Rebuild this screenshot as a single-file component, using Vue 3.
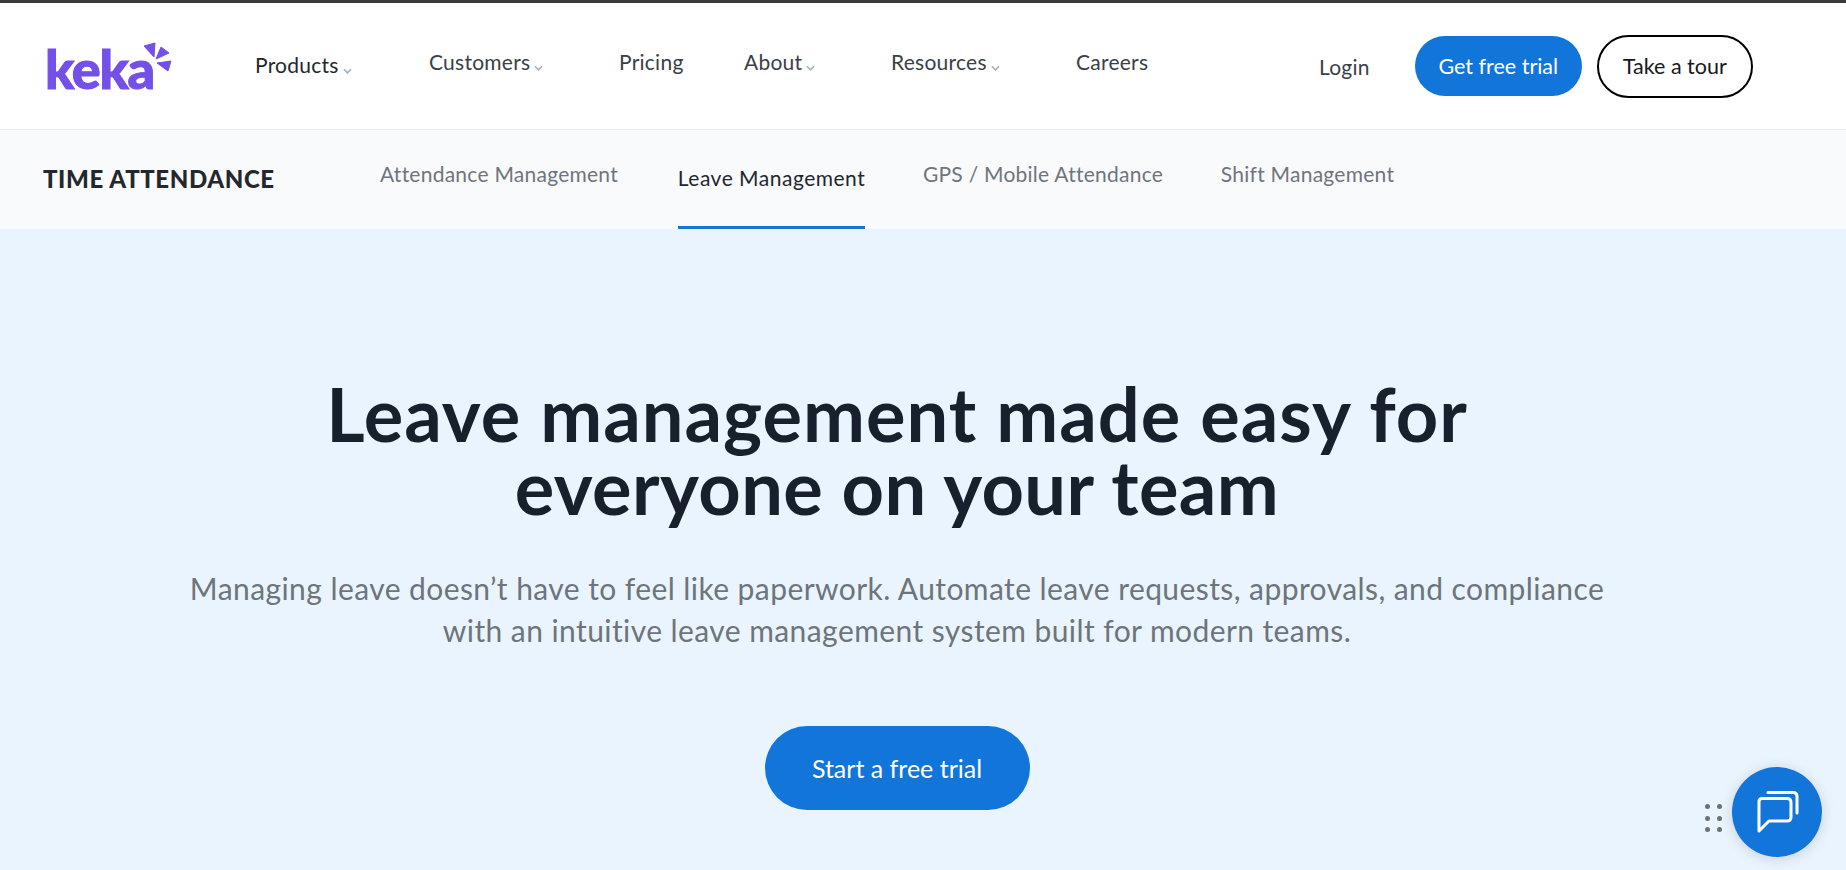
<script setup>
const navItems = [
  { label: 'Products', caret: true, dark: true, width: 174 },
  { label: 'Customers', caret: true, width: 190 },
  { label: 'Pricing', width: 125 },
  { label: 'About', caret: true, width: 147 },
  { label: 'Resources', caret: true, width: 185 },
  { label: 'Careers', width: 200 },
]
const subItems = [
  { label: 'Attendance Management', width: 238 },
  { label: 'Leave Management', width: 187, active: true },
  { label: 'GPS / Mobile Attendance', width: 236 },
  { label: 'Shift Management', width: 173 },
]
</script>

<template>
  <div class="page">
    <header class="topnav">
      <a class="logo" href="#">
        <span class="logo-word">keka</span>
        <svg class="logo-rays" viewBox="0 0 30 32" width="30" height="32">
          <path d="M1 4 L12 1 L11 15 Z" />
          <path d="M13 17 L18 5 L26 11 Z" />
          <path d="M14 21 L28 19 L25 29 Z" />
        </svg>
      </a>
      <nav class="menu">
        <a
          v-for="item in navItems"
          :key="item.label"
          class="menu-item"
          :class="{ dark: item.dark }"
          :style="{ width: item.width + 'px' }"
          href="#"
        >
          {{ item.label }}<svg v-if="item.caret" class="caret" viewBox="0 0 10 6" width="9" height="6">
            <path d="M1 1 L5 5 L9 1" />
          </svg>
        </a>
      </nav>
      <div class="actions">
        <a class="login" href="#">Login</a>
        <a class="btn-trial" href="#">Get free trial</a>
        <a class="btn-tour" href="#">Take a tour</a>
      </div>
    </header>

    <div class="subnav">
      <div class="subnav-title">TIME ATTENDANCE</div>
      <nav class="subnav-links">
        <a
          v-for="item in subItems"
          :key="item.label"
          class="subnav-link"
          :class="{ active: item.active }"
          :style="{ width: item.width + 'px' }"
          href="#"
        >{{ item.label }}</a>
      </nav>
    </div>

    <main class="hero">
      <h1>Leave management made easy for<br /><span class="tight">everyone on your team</span></h1>
      <p>
        Managing leave doesn’t have to feel like paperwork. Automate leave requests, approvals, and compliance<br />
        with an intuitive leave management system built for modern teams.
      </p>
      <a class="btn-start" href="#">Start a free trial</a>
    </main>

    <div class="chat-dots">
      <i v-for="n in 6" :key="n"></i>
    </div>
    <button class="chat" type="button">
      <svg viewBox="0 0 44 44" width="44" height="44">
        <path d="M13 2.5 H38 Q42 2.5 42 6.5 V23" />
        <path d="M7 8.5 H32 Q36 8.5 36 12.5 V27 Q36 31 32 31 H14 L4 41 V11.5 Q4 8.5 7 8.5 Z" />
      </svg>
    </button>
  </div>
</template>

<style>
html,
body {
  margin: 0;
  background: #eaf4fe;
}
</style>

<style scoped>
.page {
  height: 870px;
  overflow: hidden;
  position: relative;
  font-family: Lato, "Noto Sans", sans-serif;
  border-top: 3px solid #3a3a3a;
  box-sizing: border-box;
}

a {
  text-decoration: none;
  color: inherit;
}

.topnav {
  height: 126px;
  background: #fff;
  border-bottom: 1px solid #ececec;
  display: flex;
  align-items: center;
  padding-left: 47px;
}

.logo {
  width: 208px;
  height: 39px;
  position: relative;
  color: #7350e8;
  margin-top: 5px;
}

.logo-word {
  display: block;
  margin-left: -2px;
  font-size: 54px;
  line-height: 39px;
  font-weight: 900;
  letter-spacing: -1.3px;
  -webkit-text-stroke: 1px #7350e8;
}

.logo-rays {
  position: absolute;
  left: 96px;
  top: -7px;
  fill: #7350e8;
  stroke: #7350e8;
  stroke-width: 1;
  stroke-linejoin: round;
}

.menu {
  display: flex;
  align-items: center;
  margin-top: -9px;
}

.menu-item {
  font-size: 21px;
  letter-spacing: 0.25px;
  color: #3a4048;
  white-space: nowrap;
}

.menu-item.dark {
  color: #1f2730;
  position: relative;
  top: 3px;
}

.caret {
  fill: none;
  stroke: #a9afb6;
  stroke-width: 1.8;
  margin-left: 4px;
  vertical-align: -1px;
}

.actions {
  display: flex;
  align-items: center;
  margin-left: 43px;
}

.login {
  font-size: 21px;
  letter-spacing: 0.25px;
  color: #3a4048;
  margin-right: 45px;
}

.btn-trial {
  width: 167px;
  height: 60px;
  border-radius: 30px;
  background: #1175d9;
  color: #fff;
  font-size: 21.5px;
  display: flex;
  align-items: center;
  justify-content: center;
  margin-right: 15px;
}

.btn-tour {
  width: 156px;
  height: 63px;
  box-sizing: border-box;
  border: 2px solid #000;
  border-radius: 32px;
  color: #16181b;
  font-size: 21.5px;
  display: flex;
  align-items: center;
  justify-content: center;
}

.subnav {
  height: 99px;
  background: #f9fafc;
  display: flex;
  padding-left: 43px;
}

.subnav-title {
  width: 337px;
  font-size: 24px;
  letter-spacing: 0.62px;
  font-weight: 900;
  color: #24282d;
  line-height: 98px;
}

.subnav-links {
  display: flex;
  gap: 60px;
}

.subnav-link {
  display: flex;
  justify-content: center;
  white-space: nowrap;
  font-size: 21px;
  letter-spacing: 0.25px;
  color: #6f757c;
  line-height: 88px;
}

.subnav-link.active {
  color: #1f2730;
  letter-spacing: 0.5px;
  line-height: 95px;
  border-bottom: 3px solid #1175d9;
  height: 96px;
}

.hero {
  text-align: center;
  padding-top: 148px;
}

.hero h1 {
  margin: 0;
  font-size: 74px;
  letter-spacing: 1px;
  line-height: 73px;
  font-weight: 700;
  color: #17202c;
  padding-right: 52px;
}

.hero h1 .tight {
  letter-spacing: 0.4px;
}

.hero p {
  margin: 44px 0 0;
  font-size: 30px;
  letter-spacing: 0.42px;
  line-height: 42px;
  color: #6d747c;
  padding-right: 52px;
}

.btn-start {
  display: flex;
  align-items: center;
  justify-content: center;
  width: 265px;
  height: 84px;
  margin: 75px auto 0;
  padding-bottom: 1px;
  box-sizing: border-box;
  position: relative;
  left: -26px;
  border-radius: 42px;
  background: #1175d9;
  color: #fff;
  font-size: 25px;
}

.chat {
  position: absolute;
  right: 24px;
  bottom: 13px;
  width: 90px;
  height: 90px;
  border: 0;
  border-radius: 50%;
  background: #1175d9;
  box-shadow: 0 2px 14px rgba(0, 0, 0, 0.14);
  display: flex;
  align-items: center;
  justify-content: center;
  padding: 0;
}

.chat svg {
  fill: none;
  stroke: #fff;
  stroke-width: 3;
  stroke-linejoin: round;
  stroke-linecap: round;
}

.chat-dots {
  position: absolute;
  left: 1705px;
  top: 801px;
  display: grid;
  grid-template-columns: 5px 5px;
  gap: 6.5px;
}

.chat-dots i {
  width: 5px;
  height: 5px;
  border-radius: 50%;
  background: #6d7177;
}
</style>
